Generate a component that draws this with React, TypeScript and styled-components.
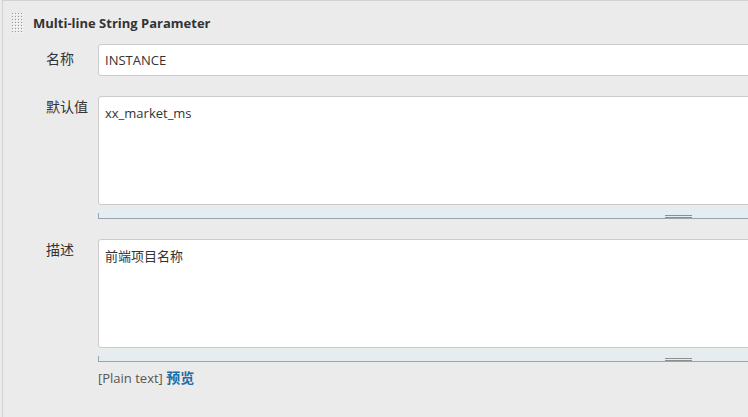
import React from 'react';
import styled, { createGlobalStyle } from 'styled-components';

const Global = createGlobalStyle`
  html, body { margin: 0; padding: 0; background: #ebebeb; }
  body {
    font-family: "Open Sans", "Noto Sans CJK SC", sans-serif;
    font-size: 13px;
    color: #333;
  }
`;

const Page = styled.div`
  width: 748px;
  height: 417px;
  overflow: hidden;
  padding-left: 2px;
  box-sizing: border-box;
`;

const Section = styled.section`
  width: 1000px;
  height: 417px;
  box-sizing: border-box;
  border-top: 1px solid #d2d2d2;
  border-left: 1px solid #d2d2d2;
  background: #ebebeb;
`;

const Header = styled.div`
  display: flex;
  align-items: center;
  gap: 9px;
  padding: 12px 0 0 9px;
  height: 21px;
`;

const Title = styled.div`
  font-weight: 700;
  font-size: 13px;
  color: #333;
  line-height: 21px;
`;

const Form = styled.div`
  display: grid;
  grid-template-columns: 52px 700px;
  row-gap: 20px;
  padding: 10px 0 0 43px;
`;

const Label = styled.div<{ $top: number }>`
  font-size: 14px;
  line-height: 18px;
  padding-top: ${(p) => p.$top}px;
  color: #333;
`;

const TextInput = styled.div`
  height: 32px;
  box-sizing: border-box;
  border: 1px solid #cbcbcb;
  border-radius: 3px;
  background: #fff;
  padding: 0 6px;
  line-height: 30px;
  font-size: 13px;
`;

const AreaWrap = styled.div`
  display: flex;
  flex-direction: column;
`;

const TextArea = styled.div`
  height: 109px;
  box-sizing: border-box;
  border: 1px solid #cbcbcb;
  border-radius: 3px;
  background: #fff;
  padding: 8px 6px 6px;
  line-height: 17px;
  font-size: 13px;
`;

const Handle = styled.div`
  position: relative;
  height: 14px;
  box-sizing: border-box;
  background: linear-gradient(to bottom, #ebebeb 0, #ebebeb 2px, #e6edf0 2px);
  border-bottom: 1px solid #97a5ae;
  &::before {
    content: "";
    position: absolute;
    left: 0;
    bottom: 0;
    width: 1px;
    height: 5px;
    background: #97a5ae;
  }
  &::after {
    content: "";
    position: absolute;
    left: 567px;
    top: 10px;
    width: 27px;
    height: 3px;
    box-sizing: border-box;
    border-top: 1px solid #8a8f90;
    border-bottom: 1px solid #8a8f90;
  }
`;

const Footer = styled.div`
  margin-top: 7px;
  line-height: 17px;
  font-size: 13px;
  color: #555;
`;

const Preview = styled.a`
  color: #1d6ca6;
  font-weight: 700;
  text-decoration: none;
  font-size: 14px;
`;

const Grip = () => (
  <svg width="12" height="21" viewBox="0 0 12 21">
    {Array.from({ length: 7 }).map((_, r) =>
      Array.from({ length: 4 }).map((__, c) => (
        <g key={`${r}-${c}`}>
          <rect x={c * 3 + 1} y={r * 3 + 1} width="1" height="1" fill="#fff" />
          <rect x={c * 3} y={r * 3} width="1" height="1" fill="#999" />
        </g>
      ))
    )}
  </svg>
);

export default function App() {
  return (
    <Page>
      <Global />
      <Section>
        <Header>
          <Grip />
          <Title>Multi-line String Parameter</Title>
        </Header>
        <Form>
          <Label $top={6}>名称</Label>
          <TextInput>INSTANCE</TextInput>

          <Label $top={2}>默认值</Label>
          <AreaWrap>
            <TextArea>xx_market_ms</TextArea>
            <Handle />
          </AreaWrap>

          <Label $top={2}>描述</Label>
          <AreaWrap>
            <TextArea>前端项目名称</TextArea>
            <Handle />
            <Footer>
              [Plain text] <Preview href="#">预览</Preview>
            </Footer>
          </AreaWrap>
        </Form>
      </Section>
    </Page>
  );
}
